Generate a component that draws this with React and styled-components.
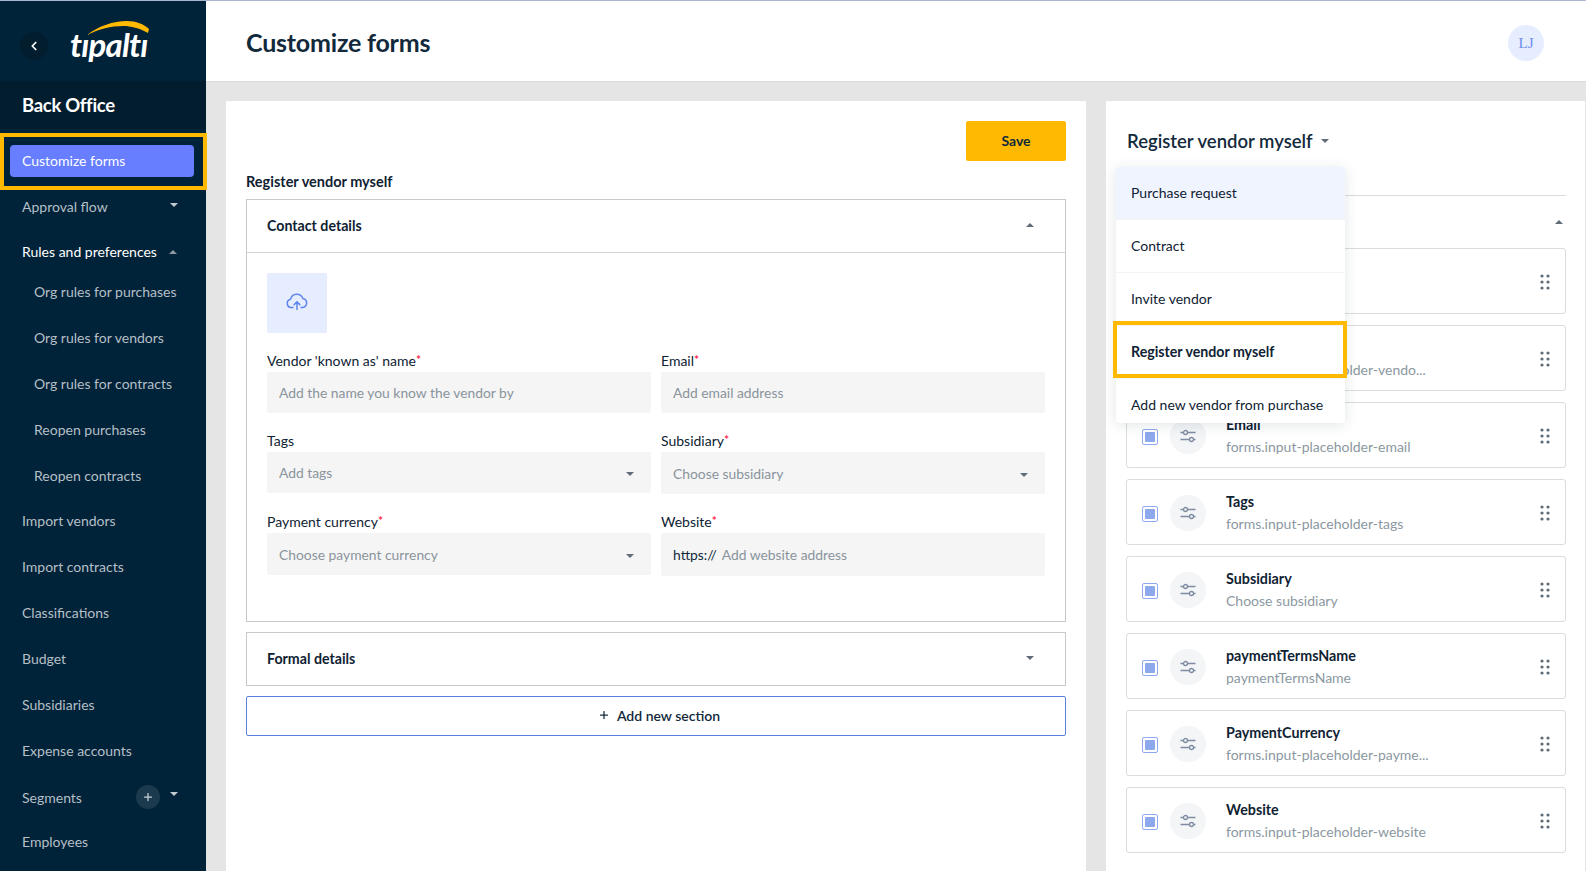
import React from 'react';
import styled, { createGlobalStyle } from 'styled-components';
import { ChevronLeft, Plus } from 'lucide-react';

const GlobalStyle = createGlobalStyle`
  html, body {
    margin: 0;
    height: 100%;
    overflow: hidden;
  }
  body {
    font-family: Lato, "Open Sans", sans-serif;
    font-size: 14px;
    color: #0f2233;
  }
  * { box-sizing: border-box; }
`;

const Page = styled.div`
  display: flex;
  height: 871px;
  border-top: 1px solid #a9b6d0;
  background: #e5e5e5;
  overflow: hidden;
`;

const Sidebar = styled.aside`
  position: relative;
  z-index: 2;
  flex: 0 0 206px;
  display: flex;
  flex-direction: column;
  background: #012339;
  color: #b5bfc6;
`;

const LogoBar = styled.div`
  display: flex;
  align-items: center;
  height: 80px;
  padding-left: 20px;
  gap: 22px;
`;

const BackButton = styled.div`
  width: 28px;
  height: 28px;
  border-radius: 50%;
  background: #021d2e;
  color: #fff;
  display: flex;
  align-items: center;
  justify-content: center;
  margin-top: 9px;
`;

const Logo = styled.div`
  position: relative;
  width: 84px;
  height: 50px;
`;

const LogoText = styled.span`
  position: absolute;
  left: 0;
  top: 8px;
  font-size: 33px;
  line-height: 40px;
  font-style: italic;
  font-weight: 700;
  letter-spacing: -0.8px;
  color: #fff;
`;

const LogoArc = styled.svg`
  position: absolute;
  left: 17px;
  top: 5px;
`;

const ProductBand = styled.div`
  height: 48px;
  display: flex;
  align-items: center;
  padding-left: 22px;
  background: #021d2e;
  color: #fff;
  font-size: 18.5px;
  font-weight: 700;
  letter-spacing: -0.3px;
`;

const Nav = styled.nav`
  display: flex;
  flex-direction: column;
  padding-top: 4px;
`;

const ActiveWrap = styled.div`
  position: relative;
  height: 57px;
  margin-bottom: -6px;
  padding: 12px 12px 12px 10px;

  &::after {
    content: '';
    position: absolute;
    top: 0;
    left: 0;
    right: -1px;
    bottom: 0;
    border: 4px solid #ffb900;
    pointer-events: none;
  }
`;

const ActiveItem = styled.div`
  height: 32px;
  border-radius: 4px;
  background: #667eff;
  color: #fff;
  display: flex;
  align-items: center;
  padding: 0 0 2px 12px;
`;

const NavItem = styled.div`
  display: flex;
  align-items: center;
  height: ${p => p.$h || 46}px;
  padding-left: ${p => (p.$sub ? 34 : 22)}px;
  color: ${p => (p.$open ? '#fff' : '#b5bfc6')};
`;

const SegmentRow = styled(NavItem)`
  margin-top: 1px;
  margin-bottom: -1px;
`;

const SubList = styled.div`
  display: flex;
  flex-direction: column;
  margin: -6px 0 -1px;
`;

const Caret = styled.span`
  display: inline-block;
  flex: none;
  width: 0;
  height: 0;
  border-left: ${p => p.$size || 4.5}px solid transparent;
  border-right: ${p => p.$size || 4.5}px solid transparent;
  ${p => (p.$up ? 'border-bottom' : 'border-top')}: ${p => (p.$size || 4.5) - 0.5}px solid ${p => p.$color || '#606c78'};
`;

const FieldCaret = styled(Caret)`
  margin-top: 3px;
`;

const NavCaret = styled(Caret)`
  margin-left: auto;
  margin-right: 28px;
  margin-top: -4px;
`;

const InlineCaret = styled(Caret)`
  margin-left: ${p => p.$gap || 12}px;
`;

const SegmentAdd = styled.span`
  width: 24px;
  height: 24px;
  margin-left: auto;
  margin-right: 10px;
  border-radius: 50%;
  background: #1b3a4e;
  color: #c9d1d7;
  display: flex;
  align-items: center;
  justify-content: center;
`;

const SegmentCaret = styled(Caret)`
  margin-right: 28px;
  margin-top: -6px;
`;

const Main = styled.div`
  flex: 1;
  min-width: 0;
  display: flex;
  flex-direction: column;
`;

const Header = styled.header`
  height: 81px;
  flex: none;
  display: flex;
  align-items: center;
  justify-content: space-between;
  padding: 4px 42px 0 40px;
  background: #fff;
  border-bottom: 1px solid #dcdcdc;
`;

const Title = styled.h1`
  margin: -2px 0 0;
  font-size: 25px;
  font-weight: 700;
  letter-spacing: -0.2px;
  color: #12293b;
`;

const Avatar = styled.div`
  width: 36px;
  height: 36px;
  border-radius: 50%;
  background: #e6edff;
  color: #6f8cec;
  font-family: "Liberation Serif", serif;
  font-size: 15px;
  display: flex;
  align-items: center;
  justify-content: center;
`;

const Content = styled.div`
  flex: 1;
  min-height: 0;
  display: flex;
  gap: 20px;
  padding: 19px 1px 0 20px;
`;

const FormPanel = styled.section`
  flex: 0 0 860px;
  padding: 20px;
  background: #fff;
`;

const SaveRow = styled.div`
  display: flex;
  justify-content: flex-end;
`;

const SaveButton = styled.button`
  width: 100px;
  height: 40px;
  padding: 0 0 2px;
  border: 0;
  border-radius: 2px;
  background: #ffb900;
  color: #12293b;
  font: 700 14px Lato, sans-serif;
`;

const FormName = styled.div`
  margin: 11px 0 7px;
  line-height: 20px;
  font-size: 14.5px;
  font-weight: 700;
`;

const Section = styled.div`
  border: 1px solid #c9c9c9;
  margin-bottom: 10px;
`;

const SectionHead = styled.div`
  height: ${p => p.$h || 52}px;
  display: flex;
  align-items: center;
  justify-content: space-between;
  padding: 0 31px 2px 20px;
  font-size: 14.2px;
  font-weight: 700;
  ${p => p.$line && 'border-bottom: 1px solid #d4d4d4;'}
`;

const SectionBody = styled.div`
  padding: 20px 20px 45px;
`;

const UploadTile = styled.div`
  width: 60px;
  height: 60px;
  margin-bottom: 17px;
  padding-bottom: 3px;
  border-radius: 2px;
  background: #e6edff;
  display: flex;
  align-items: center;
  justify-content: center;
`;

const FieldGrid = styled.div`
  display: grid;
  grid-template-columns: 384px 384px;
  column-gap: 10px;
  row-gap: 17px;
`;

const Field = styled.div`
  display: flex;
  flex-direction: column;
`;

const Label = styled.label`
  height: 22px;
  line-height: 21px;
  white-space: nowrap;

  em {
    color: #ff2a4d;
    font-style: normal;
    font-weight: 700;
    font-size: 12px;
    line-height: 0;
    vertical-align: 2px;
  }
`;

const Control = styled.div`
  height: ${p => p.$h || 41}px;
  display: flex;
  align-items: center;
  justify-content: space-between;
  padding: 0 17px 0 12px;
  border-radius: 2px;
  background: #f5f5f5;
  color: #8a949c;
  font-size: 13.85px;
`;

const Prefix = styled.span`
  color: #12293b;
  margin-right: 5px;
`;

const AddSection = styled.button`
  width: 100%;
  height: 40px;
  padding: 0 0 2px 6px;
  border: 1px solid #5b7fdc;
  border-radius: 2px;
  background: #fff;
  color: #12293b;
  font: 600 14px Lato, sans-serif;
  display: flex;
  align-items: center;
  justify-content: center;
  gap: 7px;
`;

const FieldsPanel = styled.section`
  position: relative;
  flex: 1;
  min-width: 0;
  padding: 20px 19px 0 20px;
  background: #fff;
  overflow: hidden;
`;

const PanelTitle = styled.div`
  height: 40px;
  display: flex;
  align-items: center;
  margin-bottom: 34px;
  padding-left: 1px;
  font-size: 18.5px;
  font-weight: 600;
  color: #12293b;
`;

const ListHead = styled.div`
  height: 53px;
  display: flex;
  align-items: center;
  justify-content: space-between;
  padding: 0 3px 0 20px;
  border-top: 1px solid #dcdcdc;
  font-weight: 700;
`;

const CardList = styled.div`
  display: flex;
  flex-direction: column;
  gap: 11px;
`;

const FieldCard = styled.div`
  height: 66px;
  flex: none;
  display: flex;
  align-items: center;
  padding: 2px 15px 0 15px;
  border: 1px solid #dcdcdc;
  border-radius: 3px;
  background: #fff;
`;

const Check = styled.span`
  width: 16px;
  height: 16px;
  flex: none;
  margin-top: 2px;
  display: flex;
  align-items: center;
  justify-content: center;
  border: 1px solid #8fa8f0;
  border-radius: 2px;

  &::before {
    content: '';
    width: 10px;
    height: 10px;
    border-radius: 1px;
    background: #8ea8ee;
  }
`;

const TypeBadge = styled.span`
  width: 36px;
  height: 36px;
  flex: none;
  margin: 0 20px 0 12px;
  border-radius: 50%;
  background: #f3f5f6;
  display: flex;
  align-items: center;
  justify-content: center;
`;

const CardText = styled.div`
  flex: 1;
  min-width: 0;
  line-height: 22px;
`;

const CardTitle = styled.div`
  font-size: 14.3px;
  font-weight: 700;
`;

const CardSub = styled.div`
  color: #8b98a1;
`;

const Menu = styled.div`
  position: absolute;
  z-index: 3;
  top: 66px;
  left: 10px;
  width: 229px;
`;

const MenuList = styled.div`
  height: 256px;
  overflow: hidden;
  border-radius: 3px;
  background: #fff;
  box-shadow: 0 2px 14px rgba(20, 40, 60, 0.12);
`;

const MenuItem = styled.div`
  height: 53px;
  display: flex;
  align-items: center;
  padding: 0 0 2px 15px;
  white-space: nowrap;
  border-bottom: 1px solid #f4f4f4;
  background: ${p => (p.$hover ? '#f0f4ff' : '#fff')};
  font-size: ${p => (p.$bold ? 14.2 : 14)}px;
  font-weight: ${p => (p.$bold ? 700 : 400)};
`;

const MenuMark = styled.div`
  position: absolute;
  top: 154px;
  left: -3px;
  width: 234px;
  height: 57px;
  border: 4px solid #ffb900;
  pointer-events: none;
`;

const navAfter = ['Import vendors', 'Import contracts', 'Classifications', 'Budget', 'Subsidiaries', 'Expense accounts'];
const subItems = ['Org rules for purchases', 'Org rules for vendors', 'Org rules for contracts', 'Reopen purchases', 'Reopen contracts'];
const menuItems = ['Purchase request', 'Contract', 'Invite vendor', 'Register vendor myself', 'Add new vendor from purchase'];
const cards = [
  ['Logo', 'Upload logo'],
  ['Vendor name', 'forms.input-placeholder-vendo...'],
  ['Email', 'forms.input-placeholder-email'],
  ['Tags', 'forms.input-placeholder-tags'],
  ['Subsidiary', 'Choose subsidiary'],
  ['paymentTermsName', 'paymentTermsName'],
  ['PaymentCurrency', 'forms.input-placeholder-payme...'],
  ['Website', 'forms.input-placeholder-website'],
];

const UploadIcon = () => (
  <svg width="22" height="19" viewBox="0 0 22 19" fill="none" stroke="#5f86ec" strokeWidth="1.5" strokeLinecap="round" strokeLinejoin="round">
    <path d="M7 15.5H5.2A4.2 4.2 0 0 1 4.6 7.2 6.4 6.4 0 0 1 16.8 6.4 4.6 4.6 0 0 1 16.6 15.5H15" />
    <path d="M11 17.5V10M8.2 12.6 11 9.8l2.8 2.8" />
  </svg>
);

const SlidersIcon = () => (
  <svg width="18" height="14" viewBox="0 0 18 14" fill="none" stroke="#7f8ca3" strokeWidth="1.3">
    <path d="M1.5 3.5h15M1.5 10.5h15" />
    <circle cx="6.5" cy="3.5" r="2" fill="#f3f5f6" />
    <circle cx="12.5" cy="10.5" r="2" fill="#f3f5f6" />
  </svg>
);

const DragDots = () => (
  <svg width="10" height="16" viewBox="0 0 10 16" fill="#5f6b76">
    {[2, 8, 14].map(y => (
      <React.Fragment key={y}>
        <circle cx="2" cy={y} r="1.6" />
        <circle cx="8" cy={y} r="1.6" />
      </React.Fragment>
    ))}
  </svg>
);

const App = () => {
  return (
    <Page>
      <GlobalStyle />
      <Sidebar>
        <LogoBar>
          <BackButton><ChevronLeft size={14} strokeWidth={3} /></BackButton>
          <Logo>
            <LogoArc width="62" height="14" viewBox="0 0 62 14">
              <path d="M0 14C12 5 26 0 40 0c9 0 17 3 22 8l-1 4C52 7 44 5 36 5 24 5 12 8 0 14z" fill="#ffb900" />
            </LogoArc>
            <LogoText>tıpaltı</LogoText>
          </Logo>
        </LogoBar>
        <ProductBand>Back Office</ProductBand>
        <Nav>
          <ActiveWrap><ActiveItem>Customize forms</ActiveItem></ActiveWrap>
          <NavItem $h={45}>Approval flow<NavCaret $color="#c3cbd1" /></NavItem>
          <NavItem $open $h={45}>Rules and preferences<InlineCaret $up $color="#8e9aa3" /></NavItem>
          <SubList>
            {subItems.map(s => <NavItem $sub key={s}>{s}</NavItem>)}
          </SubList>
          {navAfter.map(s => <NavItem key={s}>{s}</NavItem>)}
          <SegmentRow>
            Segments
            <SegmentAdd><Plus size={12} strokeWidth={2.5} /></SegmentAdd>
            <SegmentCaret $color="#c3cbd1" />
          </SegmentRow>
          <NavItem $h={44}>Employees</NavItem>
        </Nav>
      </Sidebar>
      <Main>
        <Header>
          <Title>Customize forms</Title>
          <Avatar>LJ</Avatar>
        </Header>
        <Content>
          <FormPanel>
            <SaveRow><SaveButton>Save</SaveButton></SaveRow>
            <FormName>Register vendor myself</FormName>
            <Section>
              <SectionHead $line $h={53}>Contact details<Caret $up /></SectionHead>
              <SectionBody>
                <UploadTile><UploadIcon /></UploadTile>
                <FieldGrid>
                  <Field>
                    <Label>Vendor 'known as' name<em>*</em></Label>
                    <Control>Add the name you know the vendor by</Control>
                  </Field>
                  <Field>
                    <Label>Email<em>*</em></Label>
                    <Control>Add email address</Control>
                  </Field>
                  <Field>
                    <Label>Tags</Label>
                    <Control>Add tags<FieldCaret /></Control>
                  </Field>
                  <Field>
                    <Label>Subsidiary<em>*</em></Label>
                    <Control $h={42}>Choose subsidiary<FieldCaret /></Control>
                  </Field>
                  <Field>
                    <Label>Payment currency<em>*</em></Label>
                    <Control $h={42}>Choose payment currency<FieldCaret /></Control>
                  </Field>
                  <Field>
                    <Label>Website<em>*</em></Label>
                    <Control $h={43}>
                      <span><Prefix>https://</Prefix>Add website address</span>
                    </Control>
                  </Field>
                </FieldGrid>
              </SectionBody>
            </Section>
            <Section>
              <SectionHead>Formal details<Caret /></SectionHead>
            </Section>
            <AddSection><Plus size={12} strokeWidth={2.5} />Add new section</AddSection>
          </FormPanel>
          <FieldsPanel>
            <PanelTitle>Register vendor myself<InlineCaret $gap={8} /></PanelTitle>
            <ListHead>Contact details<Caret $up /></ListHead>
            <CardList>
              {cards.map(([name, sub]) => (
                <FieldCard key={name}>
                  <Check />
                  <TypeBadge><SlidersIcon /></TypeBadge>
                  <CardText>
                    <CardTitle>{name}</CardTitle>
                    <CardSub>{sub}</CardSub>
                  </CardText>
                  <DragDots />
                </FieldCard>
              ))}
            </CardList>
            <Menu>
              <MenuList>
                {menuItems.map((m, i) => (
                  <MenuItem key={m} $hover={i === 0} $bold={i === 3}>{m}</MenuItem>
                ))}
              </MenuList>
              <MenuMark />
            </Menu>
          </FieldsPanel>
        </Content>
      </Main>
    </Page>
  );
};

export default App;
